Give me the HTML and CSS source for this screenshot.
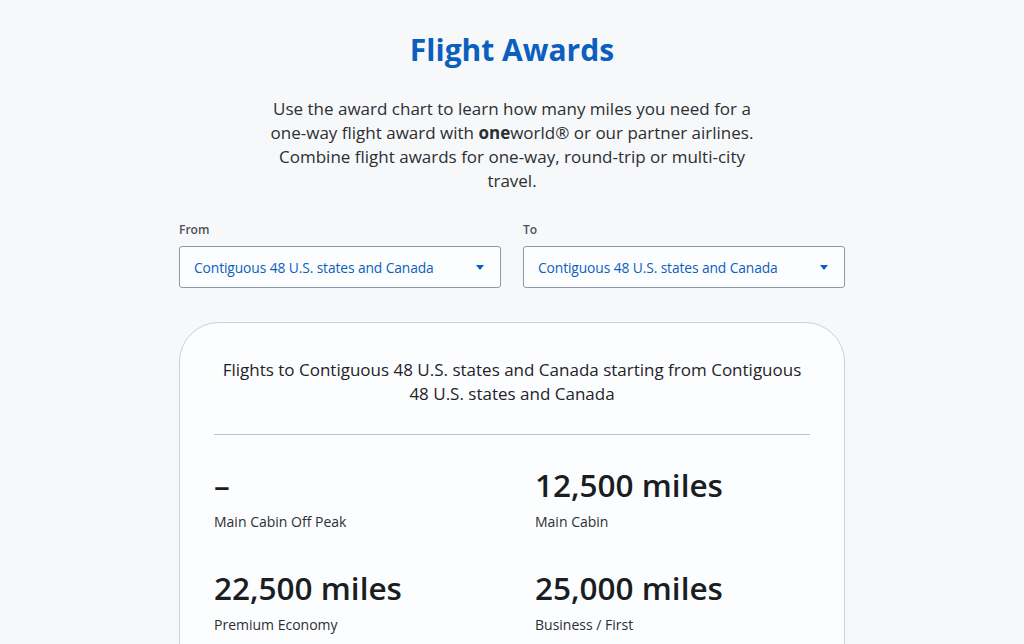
FILE: index.html
```html
<!DOCTYPE html>
<html lang="en">
<head>
<meta charset="utf-8">
<title>Flight Awards</title>
<link rel="stylesheet" href="styles.css">
</head>
<body>
<main class="page">
  <h1 class="title">Flight Awards</h1>
  <p class="intro">Use the award chart to learn how many miles you need for a one-way flight award with <b>one</b>world® or our partner airlines. Combine flight awards for one-way, round-trip or multi-city travel.</p>
  <div class="selectors">
    <div class="field">
      <label class="field-label">From</label>
      <div class="select">
        <span>Contiguous 48 U.S. states and Canada</span>
        <span class="caret"></span>
      </div>
    </div>
    <div class="field">
      <label class="field-label">To</label>
      <div class="select">
        <span>Contiguous 48 U.S. states and Canada</span>
        <span class="caret"></span>
      </div>
    </div>
  </div>
  <section class="card">
    <h2 class="card-title">Flights to Contiguous 48 U.S. states and Canada starting from Contiguous 48 U.S. states and Canada</h2>
    <div class="grid">
      <div class="item"><div class="value">–</div><div class="label">Main Cabin Off Peak</div></div>
      <div class="item"><div class="value">12,500 miles</div><div class="label">Main Cabin</div></div>
      <div class="item"><div class="value">22,500 miles</div><div class="label">Premium Economy</div></div>
      <div class="item"><div class="value">25,000 miles</div><div class="label">Business / First</div></div>
    </div>
  </section>
</main>
</body>
</html>
```

FILE: styles.css
```css
* { box-sizing: border-box; }
html, body { margin: 0; padding: 0; }
body {
  background: #f7f8fa;
  font-family: "Open Sans", "Noto Sans", sans-serif;
  color: #1f2328;
}
.page {
  width: 666px;
  margin: 0 auto;
  padding-top: 32px;
}
.title {
  margin: 0;
  text-align: center;
  font-size: 30px;
  line-height: 36px;
  font-weight: 700;
  color: #0a5fbf;
}
.intro {
  width: 500px;
  margin: 29px auto 0;
  text-align: center;
  font-size: 17px;
  line-height: 24px;
  color: #2b2f33;
}
.intro b { font-weight: 700; }
.selectors {
  display: grid;
  grid-template-columns: 1fr 1fr;
  column-gap: 22px;
  margin-top: 29px;
}
.field-label {
  display: block;
  font-size: 12px;
  line-height: 16px;
  font-weight: 600;
  color: #4a5159;
  margin-bottom: 8px;
}
.select {
  height: 42px;
  border: 1px solid #8b98a8;
  border-radius: 3px;
  background: #fcfdfe;
  display: flex;
  align-items: center;
  justify-content: space-between;
  padding: 0 16px 0 14px;
  font-size: 13.8px;
  letter-spacing: -0.1px;
  color: #0a5fbf;
}
.caret {
  width: 0;
  height: 0;
  border-left: 4px solid transparent;
  border-right: 4px solid transparent;
  border-top: 5px solid #0a5fbf;
}
.card {
  margin-top: 34px;
  border: 1px solid #c9d2dc;
  border-radius: 40px;
  background: #fcfdfe;
  padding: 35px 34px 20px;
  min-height: 400px;
}
.card-title {
  margin: 0 auto;
  font-size: 17px;
  line-height: 24px;
  font-weight: 400;
  text-align: center;
  color: #1f2328;
  padding-bottom: 28px;
  border-bottom: 1px solid #b9c4d0;
}
.grid {
  display: grid;
  grid-template-columns: 1fr 1fr;
  column-gap: 46px;
  row-gap: 36px;
  padding-top: 30px;
}
.value {
  font-size: 31.5px;
  line-height: 40px;
  font-weight: 600;
  color: #1a1e22;
}
.label {
  margin-top: 7px;
  font-size: 14px;
  line-height: 20px;
  color: #2b2f33;
}
```
